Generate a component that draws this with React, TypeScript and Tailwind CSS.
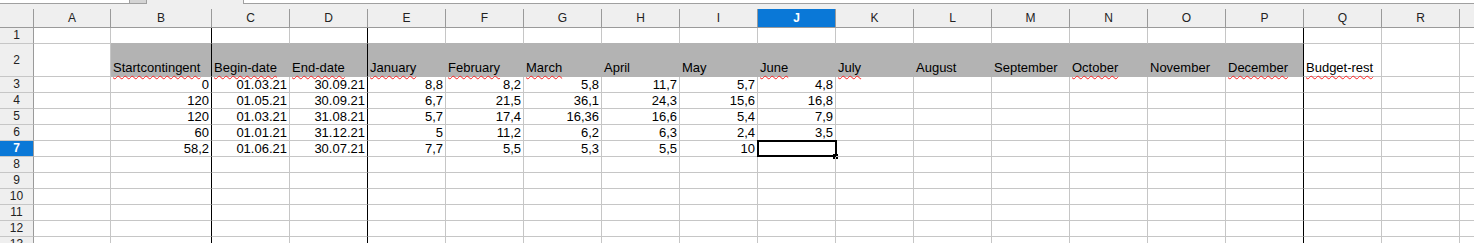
import React from "react";

type Col = { label: string; w: string; strong?: boolean };

const cols: Col[] = [
  { label: "A", w: "w-[77px]" },
  { label: "B", w: "w-[101px]", strong: true },
  { label: "C", w: "w-[78px]" },
  { label: "D", w: "w-[78px]", strong: true },
  { label: "E", w: "w-[78px]" },
  { label: "F", w: "w-[78px]" },
  { label: "G", w: "w-[78px]" },
  { label: "H", w: "w-[78px]" },
  { label: "I", w: "w-[78px]" },
  { label: "J", w: "w-[78px]" },
  { label: "K", w: "w-[78px]" },
  { label: "L", w: "w-[78px]" },
  { label: "M", w: "w-[78px]" },
  { label: "N", w: "w-[78px]" },
  { label: "O", w: "w-[78px]" },
  { label: "P", w: "w-[78px]", strong: true },
  { label: "Q", w: "w-[78px]" },
  { label: "R", w: "w-[78px]" },
];

// header texts of row 2, index 1 = column B; misspelled words get the red wave
const headers: [string, boolean][] = [
  ["", false],
  ["Startcontingent", true],
  ["Begin-date", true],
  ["End-date", true],
  ["January", true],
  ["February", true],
  ["March", true],
  ["April", false],
  ["May", false],
  ["June", true],
  ["July", true],
  ["August", false],
  ["September", false],
  ["October", true],
  ["November", false],
  ["December", true],
  ["Budget-rest", true],
  ["", false],
];

const data: string[][] = [
  ["0", "01.03.21", "30.09.21", "8,8", "8,2", "5,8", "11,7", "5,7", "4,8"],
  ["120", "01.05.21", "30.09.21", "6,7", "21,5", "36,1", "24,3", "15,6", "16,8"],
  ["120", "01.03.21", "31.08.21", "5,7", "17,4", "16,36", "16,6", "5,4", "7,9"],
  ["60", "01.01.21", "31.12.21", "5", "11,2", "6,2", "6,3", "2,4", "3,5"],
  ["58,2", "01.06.21", "30.07.21", "7,7", "5,5", "5,3", "5,5", "10", ""],
];

const SELECTED_COL = 9; // J
const SELECTED_ROW = 7;

function RowHead({ n, tall }: { n: number; tall?: boolean }) {
  const sel = n === SELECTED_ROW;
  return (
    <div
      className={`w-[34px] shrink-0 flex items-center justify-center border-r border-b border-r-[#9a9a9a] border-b-[#c6c6c6] text-[12px] ${
        tall ? "h-[33px]" : "h-[16px]"
      } ${sel ? "bg-[#0a78d7] text-white font-bold" : "bg-[#efefef] text-[#222]"}`}
    >
      {n}
    </div>
  );
}

function Cell({
  col,
  row,
  children,
}: {
  col: number;
  row: number;
  children?: React.ReactNode;
}) {
  const c = cols[col];
  const gray = row === 2 && col >= 1 && col <= 15;
  const grayAbove = row === 1 && col >= 1 && col <= 15;
  const right = c.strong && row >= 1 ? "border-r-black" : gray ? "border-r-[#b3b3b3]" : "border-r-[#c6c6c6]";
  const bottom = gray || grayAbove ? "border-b-[#b3b3b3]" : "border-b-[#c6c6c6]";
  const selected = row === SELECTED_ROW && col === SELECTED_COL;
  return (
    <div
      className={`${c.w} shrink-0 relative border-r border-b ${right} ${bottom} ${
        gray ? "bg-[#b3b3b3]" : ""
      } ${row === 2 ? "h-[33px] flex items-end pl-[2px]" : "h-[16px] flex items-center justify-end pr-[2px]"}`}
    >
      {children}
      {selected && (
        <>
          <div className="absolute -left-px -top-px w-[80px] h-[17px] border-2 border-black" />
          <div className="absolute -right-[3px] -bottom-[3px] w-[5px] h-[5px] bg-black" />
        </>
      )}
    </div>
  );
}

function Filler({ tall }: { tall?: boolean }) {
  return <div className={`flex-1 border-b border-b-[#c6c6c6] ${tall ? "h-[33px]" : "h-[16px]"}`} />;
}

export default function App() {
  return (
    <div className="w-[1474px] h-[243px] overflow-hidden bg-white font-['Liberation_Sans',Arial,sans-serif] text-[13px] leading-[15px] text-black">
      {/* bottom edge of the formula bar */}
      <div className="h-[9px] bg-[#efefef] flex items-start">
        <div className="w-[130px] h-[4px] bg-white border-b border-r border-[#a0a0a0]" />
        <div className="w-[17px] h-[4px] bg-[#d4d4d4] border-b border-r border-[#a0a0a0]" />
        <div className="w-[96px]" />
        <div className="flex-1 h-[4px] bg-white border-b border-l border-[#a0a0a0]" />
      </div>

      {/* column headers */}
      <div className="flex h-[19px] bg-[#efefef] border-b border-[#9a9a9a] text-[12px] text-[#222]">
        <div className="w-[34px] shrink-0 border-r border-[#9a9a9a]" />
        {cols.map((c, i) => (
          <div
            key={c.label}
            className={`${c.w} shrink-0 flex items-center justify-center border-r border-[#9a9a9a] ${
              i === SELECTED_COL ? "bg-[#0a78d7] text-white font-bold" : ""
            }`}
          >
            {c.label}
          </div>
        ))}
        <div className="flex-1" />
      </div>

      {/* row 1 */}
      <div className="flex">
        <RowHead n={1} />
        {cols.map((c, i) => (
          <Cell key={c.label} col={i} row={1} />
        ))}
        <Filler />
      </div>

      {/* row 2: headers */}
      <div className="flex">
        <RowHead n={2} tall />
        {cols.map((c, i) => {
          const [text, wavy] = headers[i];
          return (
            <Cell key={c.label} col={i} row={2}>
              <span
                className={`whitespace-nowrap mb-[1px] ${
                  wavy ? "underline decoration-wavy decoration-[#ff2020] decoration-1 underline-offset-[3px]" : ""
                }`}
              >
                {text}
              </span>
            </Cell>
          );
        })}
        <Filler tall />
      </div>

      {/* data rows */}
      {Array.from({ length: 11 }, (_, r) => {
        const row = r + 3;
        const values = data[r];
        return (
          <div key={row} className="flex">
            <RowHead n={row} />
            {cols.map((c, i) => (
              <Cell key={c.label} col={i} row={row}>
                {values && i >= 1 && i <= 9 ? values[i - 1] : null}
              </Cell>
            ))}
            <Filler />
          </div>
        );
      })}
    </div>
  );
}
